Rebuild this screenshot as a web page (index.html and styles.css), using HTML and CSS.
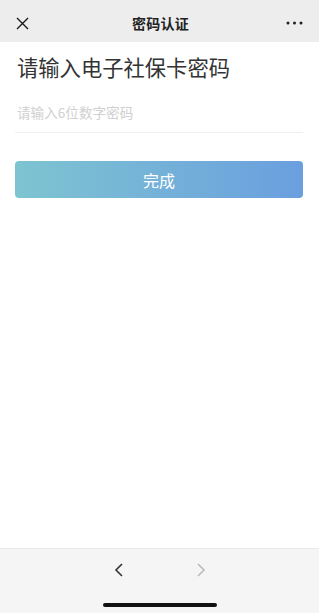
FILE: index.html
```html
<!DOCTYPE html>
<html lang="zh">
<head>
<meta charset="utf-8">
<link rel="stylesheet" href="styles.css">
</head>
<body>
<div class="app">
  <header class="topbar">
    <svg class="icon-close" width="13" height="13" viewBox="0 0 13 13"><path d="M1 1 L12 12 M12 1 L1 12" stroke="#1a1a1a" stroke-width="1.4" fill="none"/></svg>
    <div class="title">密码认证</div>
    <svg class="icon-more" width="17" height="4" viewBox="0 0 17 4"><circle cx="2" cy="2" r="1.5" fill="#222"/><circle cx="8.5" cy="2" r="1.5" fill="#222"/><circle cx="15" cy="2" r="1.5" fill="#222"/></svg>
  </header>
  <main class="content">
    <h1 class="heading">请输入电子社保卡密码</h1>
    <div class="field">请输入6位数字密码</div>
    <button class="submit">完成</button>
  </main>
  <footer class="navbar">
    <div class="nav-arrows">
      <svg width="10" height="14" viewBox="0 0 10 14"><path d="M8 1 L2 7 L8 13" stroke="#333" stroke-width="1.6" fill="none"/></svg>
      <svg width="10" height="14" viewBox="0 0 10 14"><path d="M2 1 L8 7 L2 13" stroke="#bbb" stroke-width="1.6" fill="none"/></svg>
    </div>
    <div class="home-indicator"></div>
  </footer>
</div>
</body>
</html>
```
FILE: styles.css
```css
* { box-sizing: border-box; }
html, body { margin: 0; padding: 0; }
body {
  font-family: "Noto Sans CJK SC", "Noto Sans", sans-serif;
  background: #fff;
  width: 319px;
  height: 613px;
  overflow: hidden;
}
.app {
  display: flex;
  flex-direction: column;
  height: 613px;
}
.topbar {
  height: 42px;
  background: #ededed;
  display: flex;
  align-items: center;
  justify-content: space-between;
  padding: 4px 16px 0 16px;
  flex: none;
}
.title {
  font-size: 14px;
  font-weight: 700;
  color: #222;
  letter-spacing: 0.2px;
  margin-left: 6px;
}
.content {
  flex: 1;
  background: #fff;
  padding: 0 15px;
  display: flex;
  flex-direction: column;
}
.heading {
  margin: 10px 0 0 2px;
  font-size: 21.3px;
  line-height: 30px;
  font-weight: 400;
  color: #333;
}
.field {
  margin-top: 20px;
  padding: 0 0 10px 2px;
  font-size: 13.6px;
  line-height: 20px;
  color: #d0d0d0;
  border-bottom: 1px solid #f0f0f0;
  margin-right: 1px;
}
.submit {
  margin-top: 28px;
  height: 37px;
  border: none;
  border-radius: 4px;
  background: linear-gradient(90deg, #7ec4d1 0%, #6a9fdf 100%);
  color: #fff;
  font-family: inherit;
  font-size: 16px;
  margin-right: 1px;
  padding: 0;
}
.navbar {
  flex: none;
  height: 65px;
  background: #f5f5f5;
  border-top: 1px solid #e8e8e8;
  display: flex;
  flex-direction: column;
  align-items: center;
}
.nav-arrows {
  display: flex;
  gap: 72px;
  margin-top: 14px;
  margin-left: 1px;
}
.home-indicator {
  margin-top: 26px;
  width: 114px;
  height: 4px;
  border-radius: 2px;
  background: #111;
}
```
